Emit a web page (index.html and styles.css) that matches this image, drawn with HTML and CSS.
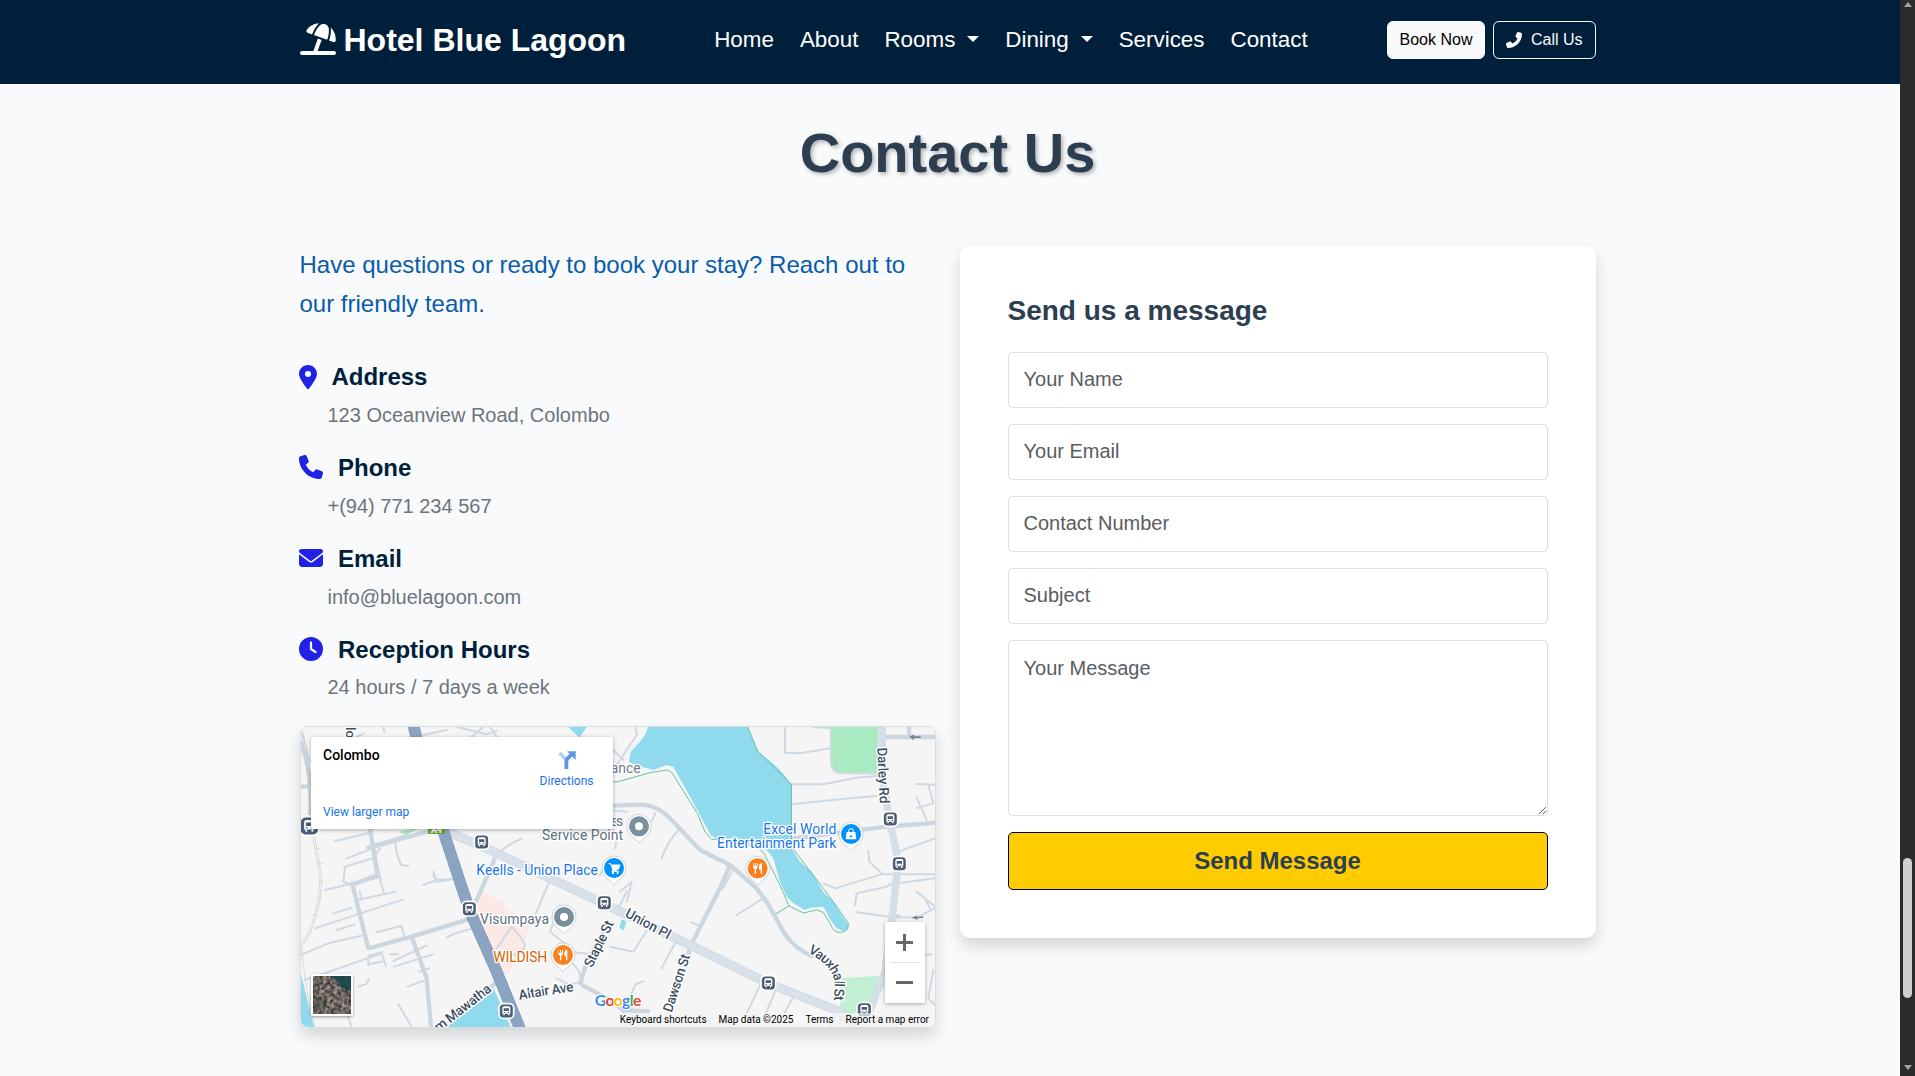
FILE: index.html
```html
<!DOCTYPE html>
<html lang="en">
<head>
<meta charset="utf-8">
<title>Contact Us - Hotel Blue Lagoon</title>
<link rel="stylesheet" href="styles.css">
</head>
<body>
<div class="page">
  <header class="navbar">
    <div class="container navbar-row">
      <a class="brand">
        <svg class="brand-icon" viewBox="0 0 576 512"><path fill="currentColor" d="M346.3 271.8l-60.1-21.9L214 448H32c-17.7 0-32 14.3-32 32s14.3 32 32 32H544c17.7 0 32-14.3 32-32s-14.3-32-32-32H282.1l64.1-176.2zm121.1-.2l-3.3 9.1 67.7 24.6c18.1 6.6 38-4.2 39.6-23.4c6.5-78.5-23.9-155.5-80.8-208.5c2 8 3.2 16.3 3.4 24.8l.2 6c1.8 57-7.3 113.8-26.8 167.4zM462 99.1c-1.1-34.4-22.5-64.8-54.4-77.4c-.9-.4-1.9-.7-2.8-1.1c-33-11.7-69.8-2.4-93.1 23.8l-4 4.5C272.4 88.3 245 134.2 226.8 184l-3.3 9.1L434 269.7l3.3-9.1c18.1-49.8 26.6-102.5 24.9-155.5l-.2-6zM107.2 112.9c-11.1 15.7-2.8 36.8 15.3 43.4l71 25.8 3.3-9.1c19.5-53.6 49.1-103 87.1-145.5l4-4.5c6.2-6.9 13.1-13 20.5-18.2c-79.6 2.5-154.7 42.2-201.2 108z"/></svg>
        <span>Hotel Blue Lagoon</span>
      </a>
      <nav class="nav-links">
        <a>Home</a>
        <a>About</a>
        <a>Rooms <span class="caret"></span></a>
        <a>Dining <span class="caret"></span></a>
        <a>Services</a>
        <a>Contact</a>
      </nav>
      <div class="nav-actions">
        <a class="btn btn-light">Book Now</a>
        <a class="btn btn-outline"><svg class="btn-icon" viewBox="0 0 512 512"><path fill="currentColor" transform="matrix(-1 0 0 1 512 0)" d="M164.9 24.6c-7.7-18.6-28-28.5-47.4-23.2l-88 24C12.1 30.2 0 46 0 64C0 311.4 200.6 512 448 512c18 0 33.8-12.1 38.6-29.5l24-88c5.3-19.4-4.6-39.7-23.2-47.4l-96-40c-16.3-6.8-35.2-2.1-46.3 11.6L304.7 368C234.3 334.7 177.3 277.7 144 207.3L193.3 167c13.7-11.2 18.4-30 11.6-46.3l-40-96z"/></svg>Call Us</a>
      </div>
    </div>
  </header>

  <main class="container">
    <h1 class="title">Contact Us</h1>
    <div class="columns">
      <section class="info">
        <p class="lead">Have questions or ready to book your stay? Reach out to our friendly team.</p>
        <div class="item">
          <h5><svg class="icon icon-narrow" viewBox="0 0 384 512"><path fill="currentColor" d="M215.7 499.2C267 435 384 279.4 384 192C384 86 298 0 192 0S0 86 0 192c0 87.4 117 243 168.3 307.2c12.3 15.3 35.1 15.3 47.4 0zM192 128a64 64 0 1 1 0 128 64 64 0 1 1 0-128z"/></svg>Address</h5>
          <p>123 Oceanview Road, Colombo</p>
        </div>
        <div class="item">
          <h5><svg class="icon" viewBox="0 0 512 512"><path fill="currentColor" d="M164.9 24.6c-7.7-18.6-28-28.5-47.4-23.2l-88 24C12.1 30.2 0 46 0 64C0 311.4 200.6 512 448 512c18 0 33.8-12.1 38.6-29.5l24-88c5.3-19.4-4.6-39.7-23.2-47.4l-96-40c-16.3-6.8-35.2-2.1-46.3 11.6L304.7 368C234.3 334.7 177.3 277.7 144 207.3L193.3 167c13.7-11.2 18.4-30 11.6-46.3l-40-96z"/></svg>Phone</h5>
          <p>+(94) 771 234 567</p>
        </div>
        <div class="item">
          <h5><svg class="icon" viewBox="0 0 512 512"><path fill="currentColor" d="M48 64C21.5 64 0 85.5 0 112c0 15.1 7.1 29.3 19.2 38.4L236.8 313.6c11.4 8.5 27 8.5 38.4 0L492.8 150.4c12.1-9.1 19.2-23.3 19.2-38.4c0-26.5-21.5-48-48-48H48zM0 176V384c0 35.3 28.7 64 64 64H448c35.3 0 64-28.7 64-64V176L294.4 339.2c-22.8 17.1-54 17.1-76.8 0L0 176z"/></svg>Email</h5>
          <p>info@bluelagoon.com</p>
        </div>
        <div class="item">
          <h5><svg class="icon" viewBox="0 0 512 512"><path fill="currentColor" d="M256 0a256 256 0 1 1 0 512A256 256 0 1 1 256 0zM232 120V256c0 8 4 15.5 10.7 20l96 64c11 7.4 25.9 4.4 33.3-6.7s4.4-25.9-6.7-33.3L280 243.2V120c0-13.3-10.7-24-24-24s-24 10.7-24 24z"/></svg>Reception Hours</h5>
          <p>24 hours / 7 days a week</p>
        </div>

        <div class="map">
          <svg class="map-canvas" viewBox="33 36 1902 900" preserveAspectRatio="none">
            <defs>
              <g id="pin"><path d="M0 50C-8 38-36 28-36 0A36 36 0 0 1 36 0C36 28 8 38 0 50z" fill="#fff" stroke="#b9c0c6" stroke-width="2"/><circle r="30"/></g>
              <g id="bus"><rect x="-22" y="-22" width="44" height="44" rx="13" fill="#4a5f75" stroke="#fff" stroke-width="5"/><path fill="#fff" d="M-12-9q0-5 5-5H7q5 0 5 5V8h-3v5H5V8H-5v5h-4V8h-3z"/><path fill="#4a5f75" d="M-8-8H8V0H-8zM-8 3h4v3h-4zM4 3h4v3H4z"/></g>
              <g id="fork"><path d="M-14-15v10q0 6 5 7v14h4V2q5-1 5-7v-10h-3v9h-3v-9h-3v9h-3v-9zM4-8q1-7 9-8v32H9V4H4z" fill="#fff"/></g>
              <path id="vauxhall" d="M1553 712Q1624 750 1634 800L1632 890"/>
            </defs>
            <rect x="31" y="36" width="1910" height="900" fill="#f5f5f5"/>

            <!-- blocks and parks -->
            <path fill="#fde8e6" d="M575 530L642 560 640 575 720 622 700 700 655 775 625 770 560 590z"/>
            <path fill="#a9eac2" d="M1623 36H1764V173H1645Q1630 170 1625 155z"/>
            <path fill="#c1efd3" d="M1650 790L1768 782 1760 830 1730 900H1650z"/>
            <path fill="#a9eac2" d="M325 350L365 342H380L350 360z"/>
            <path fill="#e2f2e7" d="M990 892L1120 905 1140 936H990z"/>

            <!-- water -->
            <g fill="#90daee">
              <path d="M1075 36H1373L1403 108 1460 155 1485 182 1505 210V400L1530 440 1565 470 1600 530 1630 560 1660 610 1677 630 1672 645 1660 648 1640 640 1622 615 1600 575 1560 578 1545 585 1510 565 1490 545 1470 500 1450 430 1430 405 1400 395 1340 368 1285 374 1262 360 1225 290 1150 155 1130 150 1090 165 1055 155 1017 142 1022 110 1050 80 1065 60z"/>
              <path d="M835 36H890L868 68z"/>
              <path d="M31 770L72 936H31z"/>
              <path d="M470 936L612 822 662 936z"/>
              <path d="M995 613L1009 619 1002 646 988 640z"/>
            </g>

            <!-- local roads -->
            <g fill="none" stroke="#cfd9e3" stroke-width="6" stroke-linejoin="round" stroke-linecap="round">
              <path d="M35 50L60 140M235 330L272 495M270 485L185 510 160 500 165 455 250 430 270 400M135 378L235 355M170 430L235 405M315 380Q320 430 335 450L355 453M430 470L440 500M400 510L440 495 520 490M250 390L350 360M610 430Q640 395 695 370M500 36L590 58 620 48M540 70L580 36M600 36L620 66M280 36L283 52M400 60L470 45M200 66L220 55"/>
              <path d="M105 525L270 485M270 495L283 535M210 530L213 555M200 555L318 530M130 595L185 578M75 640L340 553M140 645L195 628M35 718L115 685 215 662M260 652L335 632 343 665M45 795L275 715 288 753M235 750V722L275 712M235 748L275 740M205 815L230 806 237 790M470 668Q500 650 545 642M325 718H300M310 738L410 692M312 755L428 718M388 770L418 760M352 815L400 798M325 868L365 936M170 895L185 936M430 480L440 500 480 494"/>
              <path d="M620 700L665 635Q690 660 705 690Q700 715 670 720M725 625L780 495M640 775L610 810M810 570L780 650 830 690M835 735Q880 770 870 800L840 810 800 790M845 710L900 718M930 480L955 430M990 530L1025 500 1010 560M1115 760L1165 665"/>
              <path d="M960 95L1000 135M980 150L1040 60Q1040 45 1035 36M1095 295L1085 320M1115 430Q1130 385 1165 345M1010 290L960 285M970 345Q985 360 975 400M1485 36V113L1530 115 1620 100M1570 36L1622 40 1623 110 1624 150Q1628 168 1645 174L1760 176M1505 208L1600 208 1700 188 1760 183M1505 268L1680 250 1760 243M1880 207L1935 209M1915 210L1930 265 1880 280M1880 248L1910 315M1735 408L1738 440 1775 475M1825 410L1935 370M1500 370L1620 350M1600 505L1635 520 1775 478 1935 478"/>
              <path d="M1695 570L1700 535 1790 515 1800 508 1935 490M1700 592L1800 605 1880 608 1935 580M1880 530L1935 575M1905 550L1920 580M1340 600L1420 550M1205 622L1230 633M1370 895L1420 790M1425 900L1455 830M1480 900L1510 845M1000 895L1035 810 1060 798M960 695L1030 710 1075 640M980 590L1010 530M1895 720L1925 718M1930 765L1915 850 1935 870M1800 825L1775 810M1650 890V936M1620 936L1640 890M1300 520L1325 470"/>
            </g>
            <g fill="none" stroke="#cbd6df" stroke-width="13" stroke-linejoin="round">
              <path d="M185 500L235 700 365 665 545 610M365 665L410 790 423 936M240 340L262 480 185 510M230 400L430 345M31 80Q70 180 60 300M31 215H63"/>
              <path d="M870 810L890 740 960 620M690 840L760 825M875 810L960 855 1000 885 1080 890M545 590L615 430M600 820L640 780"/>
              <path d="M960 272L1060 269Q1110 275 1150 320L1230 405 1320 450 1400 520 1430 560 1480 650Q1510 700 1570 725M1320 450L1290 520 1200 695 1195 720M1780 66H1940M1857 36V66M1500 372L1790 335 1940 323M1800 605H1830"/>
            </g>
            <g fill="none" stroke="#d3dee6" stroke-width="22" stroke-linejoin="round">
              <path d="M1776 36L1780 200 1800 320 1825 440 1805 620 1785 770 1735 900"/>
              <path d="M450 340L600 405 960 575 1210 695 1435 805 1650 890 1700 936" stroke="#cdd8e2" stroke-width="27"/>
              <path d="M450 340L600 405 960 575 1210 695 1435 805 1650 890 1700 936" stroke="#d8e1e9" stroke-width="22"/>
            </g>
            <path fill="none" stroke="#7d99ba" stroke-width="35" stroke-linejoin="round" d="M370 30L385 90 430 260 462 355 508 495 540 590 620 770 692 946"/>
            <path fill="none" stroke="#8ba4c1" stroke-width="31" stroke-linejoin="round" d="M370 30L385 90 430 260 462 355 508 495 540 590 620 770 692 946"/>
            <g fill="none" stroke="#c8ccd0" stroke-width="2">
              <path d="M36 60Q60 210 62 330L90 490Q85 620 33 690M42 60Q66 210 68 330L96 490Q91 620 39 690"/>
              <path d="M34 690Q45 830 75 936M48 170h14M50 210h14M54 250h14M76 400h16M80 445h18M84 500h14M80 550h14M66 600h14"/>
            </g>
            <g fill="none" stroke="#66c29d" stroke-width="3">
              <path d="M960 202L985 200 1080 173 1130 165 1145 172 1222 295 1245 350 1265 373H1320L1350 385 1400 395 1422 415 1470 510 1497 573 1455 598"/>
              <path d="M1373 36L1403 108 1504 208V395L1600 520 1630 560 1675 625Q1675 655 1645 652Q1630 650 1620 625L1600 592 1580 585 1540 594 1497 573"/>
            </g>
            <path fill="#78838d" d="M1858 66l14-8v6h20v5h-20v6zM1865 608l17-7-2 5 20-2v5l-19 1 3 5z"/>

            <!-- street names -->
            <g class="street">
              <text transform="translate(168 36) rotate(90)">lo</text>
              <text transform="translate(1762 98) rotate(87.5)" textLength="168">Darley Rd</text>
              <text transform="translate(1003 604) rotate(28)" textLength="148">Union Pl</text>
              <text transform="translate(906 760) rotate(-64)" textLength="150">Staple St</text>
              <text transform="translate(688 854) rotate(-9)" textLength="166">Altair Ave</text>
              <text transform="translate(446 952) rotate(-38)" textLength="204">m Mawatha</text>
              <text transform="translate(1145 894) rotate(-72)" textLength="180">Dawson St</text>
              <text><textPath href="#vauxhall" textLength="180">Vauxhall St</textPath></text>
            </g>

            <!-- places -->
            <rect x="414" y="325" width="51" height="32" fill="#6ba43c"/>
            <text x="423" y="355" font-size="26" font-weight="700" fill="#fff" font-family="Roboto, sans-serif">A4</text>
            <g class="place">
              <text x="935" y="174" textLength="117" fill="#6b7d8a">trance</text>
              <text x="904" y="332" textLength="96" fill="#5d717e">access</text>
              <text x="756" y="375" textLength="243" fill="#5d717e">Service Point</text>
              <text x="570" y="627" textLength="207" fill="#5d717e">Visumpaya</text>
              <text x="559" y="480" textLength="365" fill="#1a73e8">Keells - Union Place</text>
              <text x="1420" y="357" textLength="219" fill="#1a73e8">Excel World</text>
              <text x="1281" y="399" textLength="358" fill="#1a73e8">Entertainment Park</text>
              <text x="610" y="741" textLength="162" fill="#d56000">WILDISH</text>
            </g>

            <use href="#bus" x="575" y="381"/><use href="#bus" x="538" y="581"/><use href="#bus" x="943" y="563"/>
            <use href="#bus" x="649" y="888"/><use href="#bus" x="1435" y="804"/><use href="#bus" x="1801" y="312"/>
            <use href="#bus" x="1828" y="446"/><use href="#bus" x="1723" y="884"/>
            <use href="#bus" transform="translate(58 333) scale(1.3)"/>

            <use href="#pin" x="1047" y="334" fill="#78909c"/><circle cx="1047" cy="334" r="12" fill="#fff"/>
            <use href="#pin" x="822" y="606" fill="#78909c"/><circle cx="822" cy="606" r="12" fill="#fff"/>
            <use href="#pin" x="1403" y="460" fill="#fa7f1d"/><use href="#fork" x="1403" y="460"/>
            <use href="#pin" x="819" y="720" fill="#fa7f1d"/><use href="#fork" x="819" y="720"/>
            <use href="#pin" x="972" y="459" fill="#0091ff"/>
            <path d="M956 446h6l6 17h17l5-13h-24M968 463l-2 6h20" fill="#fff" stroke="#fff" stroke-width="3"/><circle cx="969" cy="474" r="3.5" fill="#fff"/><circle cx="983" cy="474" r="3.5" fill="#fff"/>
            <use href="#pin" x="1683" y="357" fill="#0091ff"/>
            <path d="M1670 351h26l3 22h-32z" fill="#fff"/><path d="M1676 352v-4q0-7 7-7t7 7v4" fill="none" stroke="#fff" stroke-width="3"/><path d="M1678 366q5-11 10 0z" fill="#0091ff"/>

            <text class="logo" x="914" y="872" textLength="140"><tspan fill="#4285f4">G</tspan><tspan fill="#ea4335">o</tspan><tspan fill="#fbbc05">o</tspan><tspan fill="#4285f4">g</tspan><tspan fill="#34a853">l</tspan><tspan fill="#ea4335">e</tspan></text>
          </svg>

          <div class="map-card">
            <div class="map-card-text"><strong>Colombo</strong><a>View larger map</a></div>
            <a class="directions">
              <svg viewBox="0 0 56 56"><path d="M5 6L27 29" stroke="#b3cdf5" stroke-width="11"/><path d="M26 56V31Q26 27 30 23L42 11" fill="none" stroke="#5e97e8" stroke-width="12"/><path d="M28 1H55V28z" fill="#5e97e8"/></svg>
              Directions
            </a>
          </div>
          <div class="satellite">
            <svg viewBox="0 0 38 38" preserveAspectRatio="none">
              <defs><filter id="terrain" x="0" y="0" width="1" height="1" color-interpolation-filters="sRGB"><feTurbulence type="fractalNoise" baseFrequency=".28" numOctaves="3" seed="4"/><feColorMatrix values=".8 .3 0 0 -.12 .75 .3 0 0 -.13 .65 .3 0 0 -.1 0 0 0 0 1"/></filter></defs>
              <rect width="38" height="38" filter="url(#terrain)"/>
              <path d="M17 0H38V16L28 11 23 4z" fill="#16474c" opacity=".9"/>
              <path d="M0 18L14 26 10 38H0z" fill="#33473c" opacity=".35"/>
            </svg>
          </div>
          <div class="zoom"><span class="plus"></span><span class="rule"></span><span class="minus"></span></div>
          <div class="attribution"><span>Keyboard shortcuts</span><span>Map data ©2025</span><span>Terms</span><span>Report a map error</span></div>
        </div>
      </section>

      <form class="card">
        <h3>Send us a message</h3>
        <input type="text" placeholder="Your Name">
        <input type="email" placeholder="Your Email">
        <input type="tel" placeholder="Contact Number">
        <input type="text" placeholder="Subject">
        <textarea rows="5" placeholder="Your Message"></textarea>
        <button type="button">Send Message</button>
      </form>
    </div>
  </main>
</div>
<aside class="scrollbar"><i class="arrow-up"></i><i class="thumb"></i><i class="arrow-down"></i></aside>
</body>
</html>
```
FILE: styles.css
```css
* { box-sizing: border-box; }

body {
  margin: 0;
  height: 1076px;
  display: flex;
  overflow: hidden;
  background: #f8fafb;
  font-family: "Liberation Sans", Arial, sans-serif;
  font-size: 16px;
  line-height: 1.5;
}

h1, h3, h5, p { margin: 0; }

.page { flex: 1; min-width: 0; }
.container { width: 1296px; margin-left: 299.5px; }

/* navigation */
.navbar { height: 84px; background: #001f3b; color: #fff; }
.navbar-row { display: flex; align-items: center; height: 80px; }
.brand { display: flex; align-items: center; gap: 8px; font-size: 32px; font-weight: 700; white-space: nowrap; }
.brand-icon { width: 36px; height: 32px; margin-bottom: 2px; }
.nav-links { display: flex; gap: 26px; margin-left: 88px; font-size: 22.4px; white-space: nowrap; }
.caret { display: inline-block; margin-left: 5.7px; vertical-align: 5.7px; border: 6.7px solid transparent; border-top-color: currentColor; border-bottom: 0; }
.nav-actions { display: flex; gap: 8px; margin-left: auto; }
.btn { display: flex; align-items: center; height: 38px; padding: 0 12px; border: 1px solid #f8fafb; border-radius: 6px; white-space: nowrap; }
.btn-light { background: #f8fafb; color: #000; }
.btn-outline { color: #f8fafb; }
.btn-icon { width: 16px; height: 16px; margin-right: 8.5px; }

/* heading */
.title { padding-top: 35px; text-align: center; font-size: 56px; line-height: 67.2px; color: #2c3e50; text-shadow: 2px 2px 4px rgba(0, 0, 0, .3); }
.columns { display: grid; grid-template-columns: 636px 636px; gap: 24px; align-items: start; margin-top: 60.15px; }

/* contact details */
.lead { margin-bottom: 40px; font-size: 24px; line-height: 38.4px; color: #0a5cab; }
.item { margin-bottom: 24px; }
.item h5 { display: flex; align-items: center; margin-bottom: 8px; font-size: 24px; line-height: 28.8px; color: #001f3b; }
.item p { padding-left: 28px; font-size: 20px; line-height: 30px; color: #6c757d; }
.icon { width: 24px; height: 24px; margin: -2px 14.6px 0 -.1px; color: #2222e6; }
.icon-narrow { width: 18px; margin-right: 14px; }

/* map */
.map { position: relative; height: 302px; border: 1px solid #dcdddf; border-radius: 8px; overflow: hidden; }
.info .map { box-shadow: 0 8px 16px rgba(0, 0, 0, .15); }
.map-canvas { display: block; width: 100%; height: 100%; }
.street text, .place text { font-family: Roboto, sans-serif; font-size: 42px; paint-order: stroke; stroke: #fff; stroke-width: 8px; stroke-linejoin: round; }
.street text { font-size: 41px; font-weight: 500; fill: #3c4f63; }
.logo { font-family: Lato, sans-serif; font-size: 47px; font-weight: 700; paint-order: stroke; stroke: #fff; stroke-width: 6px; }
.map-card { position: absolute; left: 10px; top: 10px; width: 302px; height: 92px; padding: 10px 19px 0 12.5px; display: flex; justify-content: space-between; background: #fff; border-radius: 2px; box-shadow: 0 1px 4px rgba(0, 0, 0, .3); font-family: Roboto, sans-serif; font-size: 12px; line-height: 17px; }
.map-card-text { display: flex; flex-direction: column; gap: 40px; }
.map-card strong { font-size: 14px; font-weight: 500; }
.map-card a { color: #1a73e8; }
.directions { display: flex; flex-direction: column; align-items: center; padding-top: 4px; gap: 4px; }
.directions svg { width: 18px; height: 18px; }
.satellite { position: absolute; left: 10px; bottom: 11px; width: 42px; height: 42px; border: 2px solid #fff; border-radius: 2px; box-shadow: 0 1px 3px rgba(0, 0, 0, .4); }
.satellite svg { display: block; width: 38px; height: 38px; }
.zoom { position: absolute; right: 10px; bottom: 24px; width: 40px; height: 81px; display: flex; flex-direction: column; align-items: center; justify-content: space-between; padding: 12px 0 19px; background: #fff; box-shadow: 0 1px 4px rgba(0, 0, 0, .3); }
.plus { width: 17px; height: 17px; background: linear-gradient(#666, #666) center / 17px 3px no-repeat, linear-gradient(#666, #666) center / 3px 17px no-repeat; }
.rule { width: 30px; height: 1px; margin-bottom: 7px; background: #e0e0e0; }
.minus { width: 17px; height: 3px; background: #666; }
.attribution { position: absolute; right: 0; bottom: 0; height: 14px; padding: 0 5.5px; display: flex; gap: 12px; background: rgba(245, 245, 245, .7); font-family: Roboto, sans-serif; font-size: 10px; line-height: 14px; color: #000; white-space: nowrap; }

/* form */
.card { display: flex; flex-direction: column; gap: 16px; padding: 48px; background: #fff; border-radius: 10px; box-shadow: 0 8px 16px rgba(0, 0, 0, .15); }
.card h3 { margin-bottom: 8px; font-size: 28px; line-height: 33.6px; color: #2c3e50; }
.card input, .card textarea { display: block; width: 100%; margin: 0; padding: 12px 15px; border: 1px solid #ddd; border-radius: 5px; background: #fff; font: 20px/30px "Liberation Sans", Arial, sans-serif; }
.card input { height: 56px; }
.card textarea { height: 176px; resize: vertical; }
.card ::placeholder { color: #595c5f; opacity: 1; }
.card button { height: 58px; border: 1px solid #000; border-radius: 5px; background: #fc0; color: #2c3e50; font: 700 24px/36px "Liberation Sans", Arial, sans-serif; }

/* window scrollbar */
.scrollbar { width: 15px; display: flex; flex-direction: column; align-items: center; background: #2b2b2b; padding: 2px 0 6px; }
.arrow-up, .arrow-down { border: 4.5px solid transparent; }
.arrow-up { border-top: 0; border-bottom: 5px solid #a3a3a3; }
.arrow-down { border-bottom: 0; border-top: 5px solid #a3a3a3; }
.thumb { width: 9px; height: 140px; margin: auto 0 67px; border-radius: 5px; background: #cfcfcf; }
```
